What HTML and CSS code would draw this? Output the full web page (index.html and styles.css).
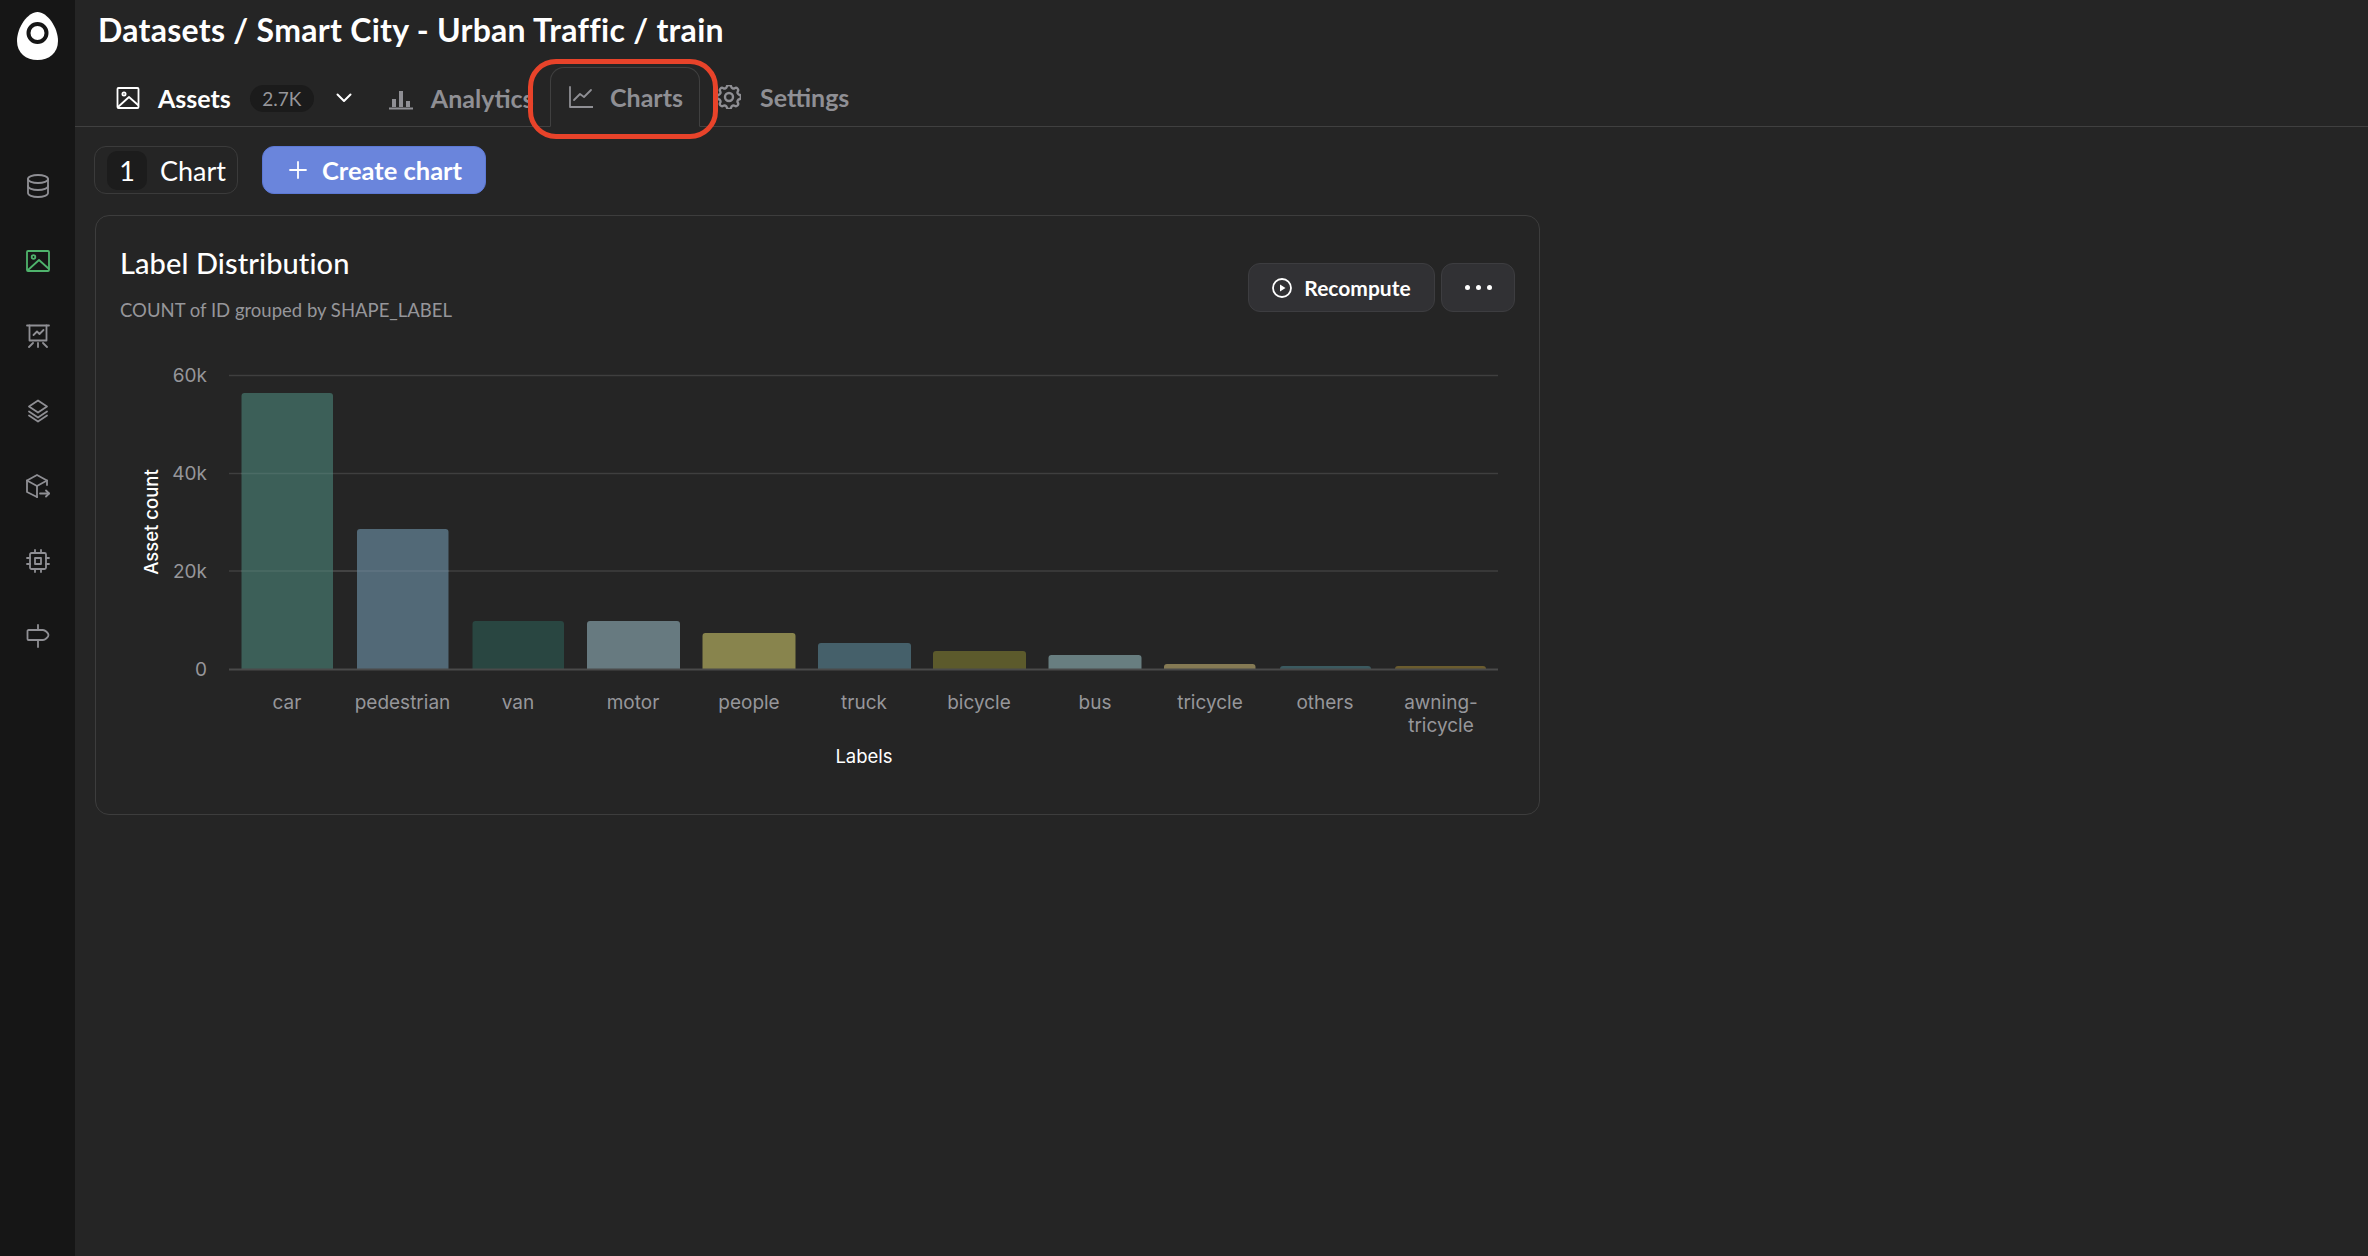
FILE: index.html
```html
<!DOCTYPE html>
<html lang="en">
<head>
    <meta charset="UTF-8">
    <meta name="viewport" content="width=device-width, initial-scale=1.0">
    <title>Charts - Smart City - Urban Traffic</title>
    <link rel="stylesheet" href="styles.css">
</head>
<body>
    <div class="app">
        <aside class="sidebar">
            <svg class="logo" viewBox="0 0 41 48"><path fill="#fff" d="M20.5 0C30 0 41 15 41 29c0 12-9 19-20.5 19S0 41 0 29C0 15 11 0 20.5 0z"/><circle cx="20.5" cy="21" r="9" fill="none" stroke="#161616" stroke-width="4"/></svg>
            <nav class="side-nav">
                <a class="side-link"><svg class="icon" viewBox="0 0 24 24"><ellipse cx="12" cy="5" rx="10" ry="4"/><path d="M2 5v7c0 2.200 4.500 4 10 4s10-1.800 10-4V5"/><path d="M2 12v7c0 2.200 4.500 4 10 4s10-1.800 10-4v-7"/></svg></a>
                <a class="side-link active"><svg class="icon" viewBox="0 0 24 24"><rect x="1" y="2" width="22" height="20" rx="1"/><circle cx="7.500" cy="8" r="1.800"/><path d="M2 21l11-10 10 9"/></svg></a>
                <a class="side-link"><svg class="icon" viewBox="0 0 24 24"><path d="M1 1.500h22"/><path d="M3.500 1.500v15h17v-15"/><path d="M7.500 11l3.500-3.500 2.500 2.500 4-4"/><path d="M12 19v4"/><path d="M7 19l-4 4"/><path d="M17 19l4 4"/></svg></a>
                <a class="side-link"><svg class="icon" viewBox="0 0 24 24"><path d="M12 1.500L3 7.500l9 6 9-6z"/><path d="M3 12.500l9 6 9-6"/><path d="M3 16.500l9 6 9-6"/></svg></a>
                <a class="side-link"><svg class="icon" viewBox="0 0 24 24"><path d="M11 23L1 18V6.500L11 1l10 5.500V11"/><path d="M11 12l10-5.500"/><path d="M11 12v11"/><path d="M11 12L1 6.500"/><path d="M14 19.500h9"/><path d="M20 16.500l3 3-3 3"/></svg></a>
                <a class="side-link"><svg class="icon" viewBox="0 0 24 24"><rect x="4" y="4" width="16" height="16" rx="1.500"/><rect x="9" y="9" width="6" height="6"/><path d="M1 9h3M1 15h3M9 1v3M15 1v3M23 9h-3M23 15h-3M15 23v-3M9 23v-3"/></svg></a>
                <a class="side-link"><svg class="icon" viewBox="0 0 24 24"><path d="M12 1v5"/><path d="M12 16v7"/><path d="M1.500 7a1 1 0 0 1 1-1H17c2 0 5.500 3 5.500 5s-3.500 5-5.500 5H2.500a1 1 0 0 1-1-1z"/></svg></a>
            </nav>
        </aside>

        <main class="main">
            <h1 class="crumbs">Datasets / Smart City - Urban Traffic / train</h1>

            <div class="tabs">
                <a class="tab tab-assets"><svg class="icon" viewBox="0 0 24 24"><rect x="1.500" y="2" width="21" height="20" rx="1"/><circle cx="8" cy="8" r="1.600"/><path d="M2 21l11-10 9 8"/></svg>Assets</a>
                <span class="badge">2.7K</span>
                <svg class="chevron" viewBox="0 0 16 10"><path d="M1.500 1.500L8 8l6.500-6.500"/></svg>
                <a class="tab tab-analytics"><svg class="icon" viewBox="0 0 24 24"><path d="M0 22.500h24"/><path class="fat" d="M5 21v-8M12 21V5M19 21v-6"/></svg>Analytics</a>
                <a class="tab tab-charts"><svg class="icon" viewBox="0 0 24 24"><path d="M1 2v20h23"/><path d="M5 15l6-6 4 3 7-7"/></svg>Charts</a>
                <a class="tab tab-settings"><svg class="icon" viewBox="3 3 18 18"><path d="M10.325 4.317c.426-1.756 2.924-1.756 3.35 0a1.724 1.724 0 0 0 2.573 1.066c1.543-.94 3.31.826 2.37 2.37a1.724 1.724 0 0 0 1.065 2.572c1.756.426 1.756 2.924 0 3.35a1.724 1.724 0 0 0-1.066 2.573c.94 1.543-.826 3.31-2.37 2.37a1.724 1.724 0 0 0-2.572 1.065c-.426 1.756-2.924 1.756-3.35 0a1.724 1.724 0 0 0-2.573-1.066c-1.543.94-3.31-.826-2.37-2.37a1.724 1.724 0 0 0-1.065-2.572c-1.756-.426-1.756-2.924 0-3.35a1.724 1.724 0 0 0 1.066-2.573c-.94-1.543.826-3.31 2.37-2.37 1 .608 2.296.07 2.572-1.065z"/><circle cx="12" cy="12" r="3"/></svg>Settings</a>
                <div class="callout"></div>
            </div>

            <div class="toolbar">
                <div class="count"><span class="count-num">1</span>Chart</div>
                <button class="create-btn"><svg class="icon" viewBox="0 0 18 18"><path d="M9 1v16M1 9h16"/></svg>Create chart</button>
            </div>

            <section class="card">
                <div class="card-head">
                    <div>
                        <h2 class="card-title">Label Distribution</h2>
                        <p class="card-sub">COUNT of ID grouped by SHAPE_LABEL</p>
                    </div>
                    <div class="card-actions">
                        <button class="btn recompute"><svg class="icon" viewBox="0 0 20 20"><circle cx="10" cy="10" r="9"/><path class="solid" d="M8 6.500l5.500 3.500L8 13.500z"/></svg>Recompute</button>
                        <button class="btn more"><span></span><span></span><span></span></button>
                    </div>
                </div>

                <!-- viewBox uses page coordinates so the numbers can be read against the screenshot -->
                <svg class="chart" viewBox="96 340 1443 470">
                    <g class="grid">
                        <path d="M229 375.500H1498"/>
                        <path d="M229 473.500H1498"/>
                        <path d="M229 571H1498"/>
                    </g>
                    <g class="ticks">
                        <text x="207" y="382">60k</text>
                        <text x="207" y="480">40k</text>
                        <text x="207" y="578">20k</text>
                        <text x="207" y="676">0</text>
                    </g>
                    <text class="axis-title" transform="translate(158 522) rotate(-90)">Asset count</text>
                    <g class="bars">
                        <path fill="#3c5f58" d="M241.500 669V396a3 3 0 0 1 3-3h85.500a3 3 0 0 1 3 3V669z"/>
                        <path fill="#526977" d="M357 669V532a3 3 0 0 1 3-3h85.500a3 3 0 0 1 3 3V669z"/>
                        <path fill="#294641" d="M472.500 669V624a3 3 0 0 1 3-3h85.500a3 3 0 0 1 3 3V669z"/>
                        <path fill="#677a80" d="M587 669V624a3 3 0 0 1 3-3h87a3 3 0 0 1 3 3V669z"/>
                        <path fill="#88844d" d="M702.500 669V636a3 3 0 0 1 3-3h87a3 3 0 0 1 3 3V669z"/>
                        <path fill="#45606a" d="M818 669V646a3 3 0 0 1 3-3h87a3 3 0 0 1 3 3V669z"/>
                        <path fill="#5c5a2c" d="M933 669V654a3 3 0 0 1 3-3h87a3 3 0 0 1 3 3V669z"/>
                        <path fill="#687e80" d="M1048.500 669V658a3 3 0 0 1 3-3h87a3 3 0 0 1 3 3V669z"/>
                        <path fill="#857a54" d="M1164 669V667a3 3 0 0 1 3-3h85.500a3 3 0 0 1 3 3V669z"/>
                        <path fill="#3b5a60" d="M1280 669V669a3 3 0 0 1 3-3h85a3 3 0 0 1 3 3V669z"/>
                        <path fill="#6b5c2e" d="M1395 669V669a3 3 0 0 1 3-3h85a3 3 0 0 1 3 3V669z"/>
                    </g>
                    <g class="grid over">
                        <path d="M241 473.500H333"/>
                        <path d="M241 571H449"/>
                    </g>
                    <path class="baseline" d="M229 669.500H1498"/>
                    <g class="cats">
                        <text x="287" y="709">car</text>
                        <text x="402.500" y="709">pedestrian</text>
                        <text x="518" y="709">van</text>
                        <text x="633" y="709">motor</text>
                        <text x="749" y="709">people</text>
                        <text x="864" y="709">truck</text>
                        <text x="979" y="709">bicycle</text>
                        <text x="1095" y="709">bus</text>
                        <text x="1210" y="709">tricycle</text>
                        <text x="1325" y="709">others</text>
                        <text x="1441" y="709">awning-</text>
                        <text x="1441" y="732">tricycle</text>
                    </g>
                    <text class="axis-title x-title" x="864" y="763">Labels</text>
                </svg>
            </section>
        </main>
    </div>
</body>
</html>
```

FILE: styles.css
```css
* {
    box-sizing: border-box;
}
body {
    margin: 0;
    background-color: #252525;
    color: #fff;
    font-family: "Lato", "Noto Sans", sans-serif;
}
.app {
    display: flex;
    height: 1256px;
    overflow: hidden;
}
.icon {
    fill: none;
    stroke: currentColor;
    stroke-width: 1.800;
    stroke-linecap: round;
    stroke-linejoin: round;
    flex: none;
}

/* left rail */
.sidebar {
    width: 75px;
    flex: none;
    background-color: #161616;
    display: flex;
    flex-direction: column;
    align-items: center;
    padding-top: 12px;
}
.logo {
    width: 41px;
    height: 48px;
    display: block;
}
.side-nav {
    display: flex;
    flex-direction: column;
    gap: 51px;
    margin-top: 114px;
}
.side-link {
    display: block;
    width: 24px;
    height: 24px;
    color: #8f8f94;
}
.side-link .icon {
    display: block;
    width: 24px;
    height: 24px;
}
.side-link.active {
    color: #4fb36c;
}

/* header */
.main {
    flex: 1;
    min-width: 0;
    position: relative;
}
.crumbs {
    margin: 0;
    padding: 10px 0 0 23px;
    height: 59px;
    font-size: 32px;
    line-height: 40px;
    font-weight: 700;
    letter-spacing: 0.28px;
}
.tabs {
    position: relative;
    height: 69px;
    margin-top: -1px;
    padding-top: 12px;
    border-bottom: 1px solid #404040;
    display: flex;
    align-items: center;
    font-size: 25px;
    font-weight: 700;
    color: #8f8f94;
}
.tab {
    display: flex;
    align-items: center;
    gap: 18px;
}
.tab .icon {
    width: 24px;
    height: 24px;
}
.tab-assets {
    margin-left: 41px;
    color: #fff;
}
.badge {
    margin-left: 19px;
    width: 64px;
    height: 27px;
    border-radius: 14px;
    background-color: #1b1b1b;
    color: #96969a;
    font-size: 19px;
    font-weight: 400;
    line-height: 27px;
    text-align: center;
}
.chevron {
    margin-left: 22px;
    width: 16px;
    height: 10px;
    fill: none;
    stroke: #fff;
    stroke-width: 2;
    stroke-linecap: round;
    stroke-linejoin: round;
}
.tab-analytics {
    margin-left: 37px;
}
.tab-analytics .fat {
    stroke-width: 4;
    stroke-linecap: butt;
}
.tab-charts {
    position: absolute;
    left: 475px;
    top: 9px;
    width: 150px;
    height: 60px;
    padding: 0 0 0 18px;
    gap: 17px;
    border: 1px solid #404040;
    border-bottom: 1px solid #252525;
    border-radius: 14px 14px 0 0;
    background-color: #252525;
}
.tab-settings {
    position: absolute;
    left: 642px;
    top: 24px;
    gap: 19px;
}
.callout {
    position: absolute;
    left: 453px;
    top: 1px;
    width: 190px;
    height: 80px;
    border: 5px solid #e8432a;
    border-radius: 28px;
}

/* toolbar */
.toolbar {
    display: flex;
    gap: 24px;
    margin: 19px 0 0 19px;
}
.count {
    width: 144px;
    height: 48px;
    border: 1px solid #3b3b3b;
    border-radius: 12px;
    display: flex;
    align-items: center;
    padding-left: 12px;
    gap: 13px;
    font-size: 27px;
}
.count-num {
    width: 40px;
    height: 39px;
    border-radius: 10px;
    background-color: #1c1c1c;
    text-align: center;
    line-height: 39px;
}
.create-btn {
    width: 224px;
    height: 48px;
    padding-left: 9px;
    border: 1px solid #5c78d4;
    border-radius: 12px;
    background-color: #6a85dc;
    color: #fff;
    font-family: inherit;
    font-size: 25.500px;
    font-weight: 700;
    display: flex;
    align-items: center;
    justify-content: center;
    gap: 15px;
}
.create-btn .icon {
    width: 18px;
    height: 18px;
}

/* chart card */
.card {
    margin: 21px 0 0 20px;
    width: 1445px;
    height: 600px;
    border: 1px solid #3d3d3d;
    border-radius: 14px;
}
.card-head {
    height: 124px;
    display: flex;
    justify-content: space-between;
    padding: 29px 24px 0 24px;
}
.card-title {
    margin: 0;
    font-size: 29px;
    line-height: 36px;
    font-weight: 500;
    letter-spacing: 0.1px;
}
.card-sub {
    margin: 17px 0 0;
    font-size: 18.500px;
    line-height: 24px;
    color: #96969a;
}
.card-actions {
    display: flex;
    gap: 6px;
    margin-top: 18px;
}
.btn {
    height: 49px;
    border: 1px solid #3d3d40;
    border-radius: 12px;
    background-color: #313134;
    color: #fff;
    font-family: inherit;
    display: flex;
    align-items: center;
    justify-content: center;
}
.recompute {
    width: 187px;
    gap: 12px;
    font-size: 21px;
    font-weight: 700;
}
.recompute .icon {
    width: 20px;
    height: 20px;
}
.recompute .solid {
    fill: currentColor;
    stroke: none;
}
.more {
    width: 74px;
    gap: 6px;
}
.more span {
    width: 5px;
    height: 5px;
    border-radius: 50%;
    background-color: #fff;
}
.chart {
    display: block;
    width: 1443px;
    height: 470px;
    font-family: "Inter", sans-serif;
    font-size: 19px;
}
.grid path {
    stroke: #3f3f3f;
    stroke-width: 1.500;
}
.grid.over path {
    stroke: rgba(255, 255, 255, 0.08);
}
.baseline {
    stroke: #4a4a4a;
    stroke-width: 2;
}
.ticks text {
    fill: #96969a;
    text-anchor: end;
}
.cats text {
    fill: #96969a;
    text-anchor: middle;
}
.axis-title {
    fill: #fff;
    font-size: 18.500px;
    font-weight: 500;
    text-anchor: middle;
}
.x-title {
    font-weight: 400;
}
```
